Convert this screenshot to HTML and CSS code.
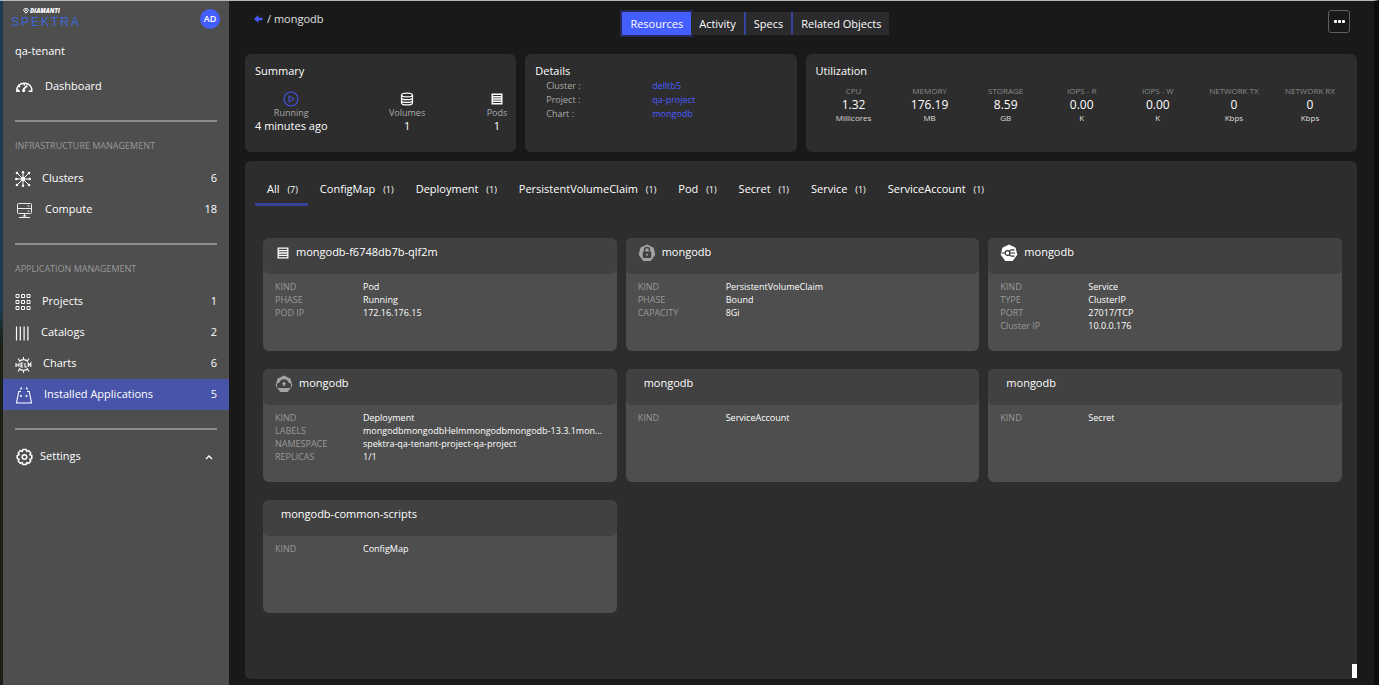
FILE: index.html
```
<!DOCTYPE html>
<html lang="en">
  <head>
    <meta charset="UTF-8" />
    <meta name="viewport" content="width=device-width, initial-scale=1.0" />
    <title>Spektra - mongodb</title>
    <link rel="stylesheet" href="styles.css">
  </head>
  <body>
    <div class="app">
      <aside class="sidebar">
        <div class="brand">
          <div class="logo">
            <div class="logo-top">
              <svg width="6" height="6" viewBox="0 0 6 6" fill="none" stroke="#fff"><path d="M1.5 .7h3l1 1.5L3 5.3.5 2.2zM2 2.2h2" /></svg>
              DIAMANTI
            </div>
            <div class="logo-name">SPEKTRA</div>
          </div>
          <button class="avatar" type="button">AD</button>
        </div>
        <div class="tenant">qa-tenant</div>

        <nav>
          <a class="nav-item" href="#">
            <svg width="19" height="18" viewBox="0 0 19 18" fill="none" stroke="#fff" stroke-width="1.4"><path d="M5 13.300H1.800C1.200 8.400 4.500 5.200 9.300 5.200s8.100 3.200 7.500 8.100h-3.200M9.300 5.500v2M3.800 8l1.400 1M1.800 12h2" /><path d="M12.300 7.500 8.200 11.600" stroke-width="1.800" /><circle cx="8.700" cy="12.600" r="1.600" fill="#fff" stroke="none" /></svg>
            <span>Dashboard</span>
          </a>

          <hr />
          <h2>INFRASTRUCTURE MANAGEMENT</h2>
          <a class="nav-item" href="#">
            <svg width="16" height="18" viewBox="0 0 16 18" stroke="#fff" fill="#fff"><path d="M8 2v14M1 9h14M2.500 3.500l11 11M13.500 3.500l-11 11" /><g stroke="none"><circle cx="8" cy="2.200" r="1.200" /><circle cx="8" cy="15.800" r="1.200" /><circle cx="1.300" cy="9" r="1.300" /><circle cx="14.700" cy="9" r="1.300" /><circle cx="2" cy="3" r="1.300" /><circle cx="14" cy="3" r="1.300" /><circle cx="2" cy="15" r="1.300" /><circle cx="14" cy="15" r="1.300" /><circle cx="8" cy="9" r="2.200" /></g></svg>
            <span>Clusters</span>
            <span class="count">6</span>
          </a>
          <a class="nav-item" href="#">
            <svg width="19" height="18" viewBox="0 0 19 18" fill="none" stroke="#eee"><rect x="2.500" y="2.500" width="14" height="10" rx="1" /><path d="M2.500 7.500h14M9.500 12.500v3M4 16.500h11M12.500 5h2M12.500 10h2M7.500 15h4" /></svg>
            <span>Compute</span>
            <span class="count">18</span>
          </a>

          <hr />
          <h2>APPLICATION MANAGEMENT</h2>
          <a class="nav-item" href="#">
            <svg width="16" height="18" viewBox="0 0 16 18" fill="none" stroke="#fff"><path d="M1 1.500h3v3H1zM6.500 1.500h3v3h-3zM12 1.500h3v3h-3zM1 7.500h3v3H1zM6.500 7.500h3v3h-3zM12 7.500h3v3h-3zM1 13.500h3v3H1zM6.500 13.500h3v3h-3zM12 13.500h3v3h-3z" /></svg>
            <span>Projects</span>
            <span class="count">1</span>
          </a>
          <a class="nav-item" href="#">
            <svg width="15" height="18" viewBox="0 0 15 18" stroke="#fff" stroke-width="1.200"><path d="M1.500 2.500v14M5.300 2.500v14M9.100 2.500v14M12.900 2.500v14" /></svg>
            <span>Catalogs</span>
            <span class="count">2</span>
          </a>
          <a class="nav-item" href="#">
            <svg width="17" height="18" viewBox="0 0 17 18" fill="none" stroke="#fff" stroke-width="1.100"><path d="M1 8v4M4 8v4M1 10h3M8.200 8H6v4h2.200M6 10h2M10 8v4h2M13.200 12V8l1.300 2 1.300-2v4M4 6.500C6.500 4 10.500 4 13 6.500M4 13.500C6.500 16 10.500 16 13 13.500M8.500 4.500V2M4.500 5.500 3 3.500M12.500 5.500 14 3.500M8.500 15.500V18M4.500 14.500 3 16.500M12.500 14.500l1.500 2" /></svg>
            <span>Charts</span>
            <span class="count">6</span>
          </a>
          <a class="nav-item active" href="#">
            <svg width="18" height="18" viewBox="0 0 18 18" fill="none" stroke="#fff" stroke-width="1.100"><path d="M6 5.500H3.800L1.500 17h15L14.200 5.500H12" /><path d="M5.800 3.700V2.500l1.200-1M12.200 3.700V2.500l-1.200-1" /><path d="M6 9v2M11.500 9v2" stroke-width="1.500" /></svg>
            <span>Installed Applications</span>
            <span class="count">5</span>
          </a>

          <hr />
          <a class="nav-item settings" href="#">
            <svg width="18" height="18" viewBox="0 0 18 18" fill="none" stroke="#fff" stroke-width="1.500"><circle cx="9.500" cy="9" r="2.300" /><path d="M7.800 1.500h3.400l.5 2 1.900-.9 2.200 2.300-1 1.900 2 .6v3.200l-2 .6 1 1.900-2.200 2.300-1.900-.9-.5 2H7.800l-.5-2-1.900.9-2.200-2.300 1-1.900-2-.6V7.400l2-.6-1-1.900 2.200-2.300 1.900.9z" stroke-linejoin="round" /></svg>
            <span>Settings</span>
            <svg class="chevron" width="8" height="6" viewBox="0 0 8 6" fill="none" stroke="#fff" stroke-width="1.400"><path d="M1 5l3-3 3 3" /></svg>
          </a>
        </nav>
      </aside>

      <main>
        <header class="topbar">
          <div class="crumbs">
            <a href="#" aria-label="Back"><svg width="9" height="8" viewBox="0 0 9 8" fill="#4a5cff"><path d="M4.500 0v2.800H8.500v2.400H4.500V8L0 4z" /></svg></a>
            <span>/ mongodb</span>
          </div>
          <div class="views">
            <button class="selected" type="button">Resources</button>
            <button type="button">Activity</button>
            <button type="button">Specs</button>
            <button type="button">Related Objects</button>
          </div>
          <button class="more" type="button" aria-label="More"><i></i><i></i><i></i></button>
        </header>

        <div class="overview">
          <section class="box">
            <h3>Summary</h3>
            <div class="summary">
              <div>
                <svg width="16" height="16" viewBox="0 0 16 16" fill="none" stroke="#4355e8"><circle cx="8" cy="8" r="7" stroke-width="1.200" /><path d="M6 4.800v6.400L11 8z" /></svg>
                <span>Running</span>
                <b>4 minutes ago</b>
              </div>
              <div>
                <svg width="16" height="16" viewBox="0 0 16 16" fill="none" stroke="#fff" stroke-width="1.200"><ellipse cx="8" cy="4" rx="5.500" ry="1.900" /><path d="M2.500 4v8c0 2.600 11 2.600 11 0V4M2.500 6.700c0 2.600 11 2.600 11 0M2.500 9.400c0 2.600 11 2.600 11 0" /></svg>
                <span>Volumes</span>
                <b>1</b>
              </div>
              <div>
                <svg width="16" height="16" viewBox="0 0 16 16" fill="none" stroke="#fff" stroke-width="1.400"><path d="M3.200 3.200h9.600v9.600H3.200zM3 5.700h10M3 8h10M3 10.300h10" /></svg>
                <span>Pods</span>
                <b>1</b>
              </div>
            </div>
          </section>

          <section class="box">
            <h3>Details</h3>
            <dl class="details">
              <dt>Cluster :</dt><dd><a href="#">delltb5</a></dd>
              <dt>Project :</dt><dd><a href="#">qa-project</a></dd>
              <dt>Chart :</dt><dd><a href="#">mongodb</a></dd>
            </dl>
          </section>

          <section class="box wide">
            <h3>Utilization</h3>
            <div class="usage">
              <div><small>CPU</small><b>1.32</b><em>Millicores</em></div>
              <div><small>MEMORY</small><b>176.19</b><em>MB</em></div>
              <div><small>STORAGE</small><b>8.59</b><em>GB</em></div>
              <div><small>IOPS - R</small><b>0.00</b><em>K</em></div>
              <div><small>IOPS - W</small><b>0.00</b><em>K</em></div>
              <div><small>NETWORK TX</small><b>0</b><em>Kbps</em></div>
              <div><small>NETWORK RX</small><b>0</b><em>Kbps</em></div>
            </div>
          </section>
        </div>

        <section class="panel">
          <div class="tabs">
            <button class="current" type="button">All <span>(7)</span></button>
            <button type="button">ConfigMap <span>(1)</span></button>
            <button type="button">Deployment <span>(1)</span></button>
            <button type="button">PersistentVolumeClaim <span>(1)</span></button>
            <button type="button">Pod <span>(1)</span></button>
            <button type="button">Secret <span>(1)</span></button>
            <button type="button">Service <span>(1)</span></button>
            <button type="button">ServiceAccount <span>(1)</span></button>
          </div>

          <div class="cards">
            <article class="card">
              <h4>
                <svg width="15" height="18" viewBox="0 0 15 18" fill="none" stroke="#fff" stroke-width="1.300"><path d="M3.200 4.200h9.600v9.600H3.200zM3 6.700h10M3 9h10M3 11.300h10" /></svg>
                mongodb-f6748db7b-qlf2m
              </h4>
              <dl>
                <dt>KIND</dt><dd>Pod</dd>
                <dt>PHASE</dt><dd>Running</dd>
                <dt>POD IP</dt><dd>172.16.176.15</dd>
              </dl>
            </article>

            <article class="card">
              <h4>
                <svg width="18" height="18" viewBox="0 0 18 18"><path d="M9 .5l6.600 3.200 1.700 7L12.700 17H5.300L.7 10.700l1.700-7z" fill="#a3a3a3" /><rect x="4.800" y="7.500" width="8.400" height="6.500" rx="1" fill="#414141" /><path d="M6.500 8V6a2.500 2.500 0 0 1 5 0v2" fill="none" stroke="#414141" stroke-width="1.300" /><circle cx="9" cy="10.700" r="1" fill="#a3a3a3" /></svg>
                mongodb
              </h4>
              <dl>
                <dt>KIND</dt><dd>PersistentVolumeClaim</dd>
                <dt>PHASE</dt><dd>Bound</dd>
                <dt>CAPACITY</dt><dd>8Gi</dd>
              </dl>
            </article>

            <article class="card">
              <h4>
                <svg width="18" height="18" viewBox="0 0 18 18"><path d="M9 .5l6.600 3.200 1.700 7L12.700 17H5.300L.7 10.700l1.700-7z" fill="#fff" /><g fill="none" stroke="#333" stroke-width="1.200"><circle cx="7.500" cy="9" r="2.300" /><path d="M1.500 9h3.500M10 9h5M9 7.200 11.500 5.800H14.500M9 10.800l2.500 1.400H14.500" /></g></svg>
                mongodb
              </h4>
              <dl>
                <dt>KIND</dt><dd>Service</dd>
                <dt>TYPE</dt><dd>ClusterIP</dd>
                <dt>PORT</dt><dd>27017/TCP</dd>
                <dt>Cluster IP</dt><dd>10.0.0.176</dd>
              </dl>
            </article>

            <article class="card">
              <h4>
                <svg width="18" height="18" viewBox="0 0 18 18"><path d="M9 .5l6.600 3.200 1.700 7L12.700 17H5.300L.7 10.700l1.700-7z" fill="#a3a3a3" /><path d="M4.500 13a2.600 2.600 0 0 1 0-5.200 4.600 4.600 0 0 1 9 0 2.600 2.600 0 0 1 0 5.200z" fill="#414141" /><path d="M9 6.500l2.500 2.700h-1.600v1.800H8.100V9.200H6.500z" fill="#a3a3a3" /></svg>
                mongodb
              </h4>
              <dl>
                <dt>KIND</dt><dd>Deployment</dd>
                <dt>LABELS</dt><dd>mongodbmongodbHelmmongodbmongodb-13.3.1mon...</dd>
                <dt>NAMESPACE</dt><dd>spektra-qa-tenant-project-qa-project</dd>
                <dt>REPLICAS</dt><dd>1/1</dd>
              </dl>
            </article>

            <article class="card">
              <h4 class="plain">mongodb</h4>
              <dl><dt>KIND</dt><dd>ServiceAccount</dd></dl>
            </article>

            <article class="card">
              <h4 class="plain">mongodb</h4>
              <dl><dt>KIND</dt><dd>Secret</dd></dl>
            </article>

            <article class="card">
              <h4 class="plain">mongodb-common-scripts</h4>
              <dl><dt>KIND</dt><dd>ConfigMap</dd></dl>
            </article>
          </div>
          <div class="thumb"></div>
        </section>
      </main>
    </div>
  </body>
</html>
```
FILE: styles.css
```
* {
  box-sizing: border-box;
}
body {
  margin: 0;
  background: #191919;
  color: #fff;
  font: 500 11px/16px "Open Sans", sans-serif;
}
a {
  color: inherit;
  text-decoration: none;
}
button {
  padding: 0;
  border: none;
  background: none;
  color: inherit;
  font: inherit;
  cursor: pointer;
}
svg {
  flex: none;
}
h2,
h3,
h4,
dl,
dd {
  margin: 0;
  font-weight: inherit;
}
.app {
  display: flex;
  min-height: 100vh;
  padding-left: 3px;
  border-top: 1px solid #b4b8b6;
  border-right: 5px solid #0c0c0c;
  background: linear-gradient(#1d3b52, #1d3b52 45%, #1b2016 50%, #1b2016);
}

/* sidebar */
.sidebar {
  flex: none;
  width: 226px;
  background: #4e4e4e;
}
.brand {
  display: flex;
  justify-content: space-between;
  height: 36px;
  padding: 6px 9px 0 8px;
}
.logo-top {
  display: flex;
  align-items: center;
  gap: 1px;
  padding-left: 12px;
  font: italic 800 6px/8px "Open Sans", sans-serif;
}
.logo-name {
  color: #3f68d8;
  font: 12px/14px "Liberation Sans", sans-serif;
  letter-spacing: 2px;
}
.avatar {
  width: 20px;
  height: 20px;
  margin-top: 2px;
  border-radius: 50%;
  background: #455eff;
  font-size: 9px;
  font-weight: 600;
}
.tenant {
  height: 34px;
  padding: 6px 12px;
}
.nav-item {
  display: flex;
  align-items: center;
  gap: 11px;
  height: 31px;
  padding: 0 12px;
}
.nav-item span {
  padding-bottom: 2px;
}
.nav-item.active {
  background: #4853aa;
}
.nav-item.settings {
  gap: 7px;
  margin-top: -7px;
}
.count,
.chevron {
  margin-left: auto;
}
.chevron {
  margin-right: 4px;
}
hr {
  height: 2px;
  margin: 18px 12px;
  border: none;
  background: #8c8c8c;
}
.sidebar h2 {
  margin: -3px 12px 8px;
  color: #999;
  font-size: 9px;
  line-height: 18px;
}

/* main area */
main {
  display: flex;
  flex: 1;
  flex-direction: column;
  min-width: 0;
  padding: 0 17px 6px 16px;
  background: #191919;
}
.topbar {
  display: grid;
  grid-template-columns: 4fr auto 5fr;
  height: 53px;
  padding: 9px 7px 0 9px;
}
.crumbs {
  display: flex;
  gap: 4px;
  padding-top: 1px;
  color: #e0e0e0;
}
.views {
  display: flex;
  height: 23px;
  margin-top: 2px;
}
.views button {
  padding: 0 8px;
  border-right: 2px solid #36439c;
  background: #2b2b2e;
}
.views button.selected {
  border: none;
  background: #455eff;
  box-shadow: 0 0 0 2px #25295c;
}
.views button:last-child {
  border: none;
}
.more {
  display: flex;
  align-items: center;
  justify-content: center;
  justify-self: end;
  gap: 1px;
  width: 22px;
  height: 23px;
  border: 1px solid #606060;
  border-radius: 3px;
}
.more i {
  width: 3px;
  height: 3px;
  border-radius: 1px;
  background: #fff;
}
.overview {
  display: grid;
  grid-template-columns: repeat(4, 1fr);
  gap: 9px;
}
.box {
  min-height: 98px;
  padding: 9px 9px 9px 10px;
  border-radius: 6px;
  background: #2d2d2d;
}
.box.wide {
  grid-column: span 2;
}
.box h3 {
  font-size: 11px;
}
.summary {
  display: flex;
  justify-content: space-between;
  padding-top: 12px;
}
.summary div {
  display: flex;
  flex-direction: column;
  align-items: center;
}
.summary span {
  color: #aaa;
  font-size: 9px;
  line-height: 12px;
}
.summary b {
  font-weight: inherit;
  line-height: 14px;
}
.details {
  display: grid;
  grid-template-columns: 106px 1fr;
  padding-left: 11px;
  color: #aaa;
  font-size: 9px;
  line-height: 14px;
}
.details a {
  color: #4a5cff;
}
.usage {
  display: grid;
  grid-template-columns: repeat(7, 1fr);
  padding-top: 6px;
  text-align: center;
}
.usage small,
.usage b,
.usage em {
  display: block;
  font-style: normal;
  font-weight: 400;
}
.usage small {
  color: #8a8a8a;
  font-size: 8px;
  line-height: 12px;
}
.usage b {
  font-size: 12px;
}
.usage em {
  color: #ddd;
  font-size: 8px;
  line-height: 10px;
}

/* resources panel */
.panel {
  position: relative;
  flex: 1;
  margin-top: 9px;
  padding: 13px 15px 18px 18px;
  border-radius: 6px;
  background: #2d2d2d;
}
.tabs {
  display: flex;
  margin-left: -8px;
}
.tabs button {
  height: 32px;
  padding: 2px 10px 0 12px;
  border-bottom: 3px solid transparent;
  white-space: nowrap;
}
.tabs button.current {
  border-color: #36439c;
}
.tabs span {
  margin-left: 5px;
  font-size: 9px;
}
.cards {
  display: grid;
  grid-template-columns: repeat(3, 1fr);
  gap: 18px 9px;
  margin-top: 32px;
}
.card {
  height: 113px;
  overflow: hidden;
  border-radius: 6px;
  background: #4e4e4e;
}
.card h4 {
  display: flex;
  gap: 6px;
  height: 36px;
  padding: 6px 12px;
  border-radius: 6px;
  background: #414141;
  font-size: 11px;
}
.card h4.plain {
  padding-left: 18px;
}
.card dl {
  display: grid;
  grid-template-columns: 88px 1fr;
  padding: 6px 12px;
  font-size: 9px;
  line-height: 13px;
}
.card dt {
  color: #999;
}
.card dd {
  white-space: nowrap;
}
.thumb {
  position: absolute;
  right: 0;
  bottom: 1px;
  width: 5px;
  height: 14px;
  background: #fff;
}
```
